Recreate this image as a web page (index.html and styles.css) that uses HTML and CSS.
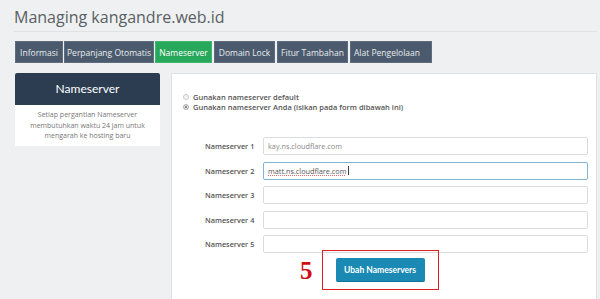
FILE: index.html
```html
<!DOCTYPE html>
<html>
<head>
<meta charset="utf-8">
<link rel="stylesheet" href="styles.css">
</head>
<body>
<div class="page">
  <h1 class="title">Managing kangandre.web.id</h1>
  <div class="tabs">
    <div class="tab t1">Informasi</div>
    <div class="tab t2">Perpanjang Otomatis</div>
    <div class="tab t3 active">Nameserver</div>
    <div class="tab t4">Domain Lock</div>
    <div class="tab t5">Fitur Tambahan</div>
    <div class="tab t6">Alat Pengelolaan <span class="caret"></span></div>
  </div>
  <div class="cols">
    <div class="side">
      <div class="side-head">Nameserver</div>
      <div class="side-body">Setiap pergantian Nameserver membutuhkan waktu 24 jam untuk mengarah ke hosting baru</div>
    </div>
    <div class="main">
      <div class="radios">
        <label class="radio"><span class="dot"></span>Gunakan nameserver default</label>
        <label class="radio"><span class="dot on"></span>Gunakan nameserver Anda (isikan pada form dibawah ini)</label>
      </div>
      <div class="form">
        <div class="row"><span class="lbl">Nameserver 1</span><div class="inp">kay.ns.cloudflare.com</div></div>
        <div class="row"><span class="lbl">Nameserver 2</span><div class="inp focus"><span class="typed">matt.ns.cloudflare.com</span><span class="cursor"></span></div></div>
        <div class="row"><span class="lbl">Nameserver 3</span><div class="inp"></div></div>
        <div class="row"><span class="lbl">Nameserver 4</span><div class="inp"></div></div>
        <div class="row"><span class="lbl">Nameserver 5</span><div class="inp"></div></div>
      </div>
      <div class="actions">
        <span class="step">5</span>
        <div class="hl"><div class="btn">Ubah Nameservers</div></div>
      </div>
    </div>
  </div>
</div>
</body>
</html>
```

FILE: styles.css
```css
* { box-sizing: border-box; }
html, body { margin: 0; padding: 0; }
body {
  background: #eef0f1;
  font-family: "Open Sans", "Liberation Sans", sans-serif;
  width: 600px;
  height: 299px;
  overflow: hidden;
}
.page { padding: 0 3px 0 15px; }
.title {
  margin: 0;
  padding: 7px 0 4px 0;
  font-weight: 400;
  font-size: 16px;
  line-height: 20px;
  color: #5a5f63;
  border-bottom: 1px solid #e0e3e5;
  margin-left: -1px;
}
.tabs {
  display: flex;
  gap: 1px;
  margin-top: 9px;
  height: 22px;
}
.tab {
  background: #4b5a6c;
  color: #e8ecf0;
  font-size: 8.5px;
  line-height: 22px;
  text-align: center;
  border: 1px solid #5f6d7e;
}
.t1 { width: 48px; }
.t2 { width: 90px; }
.t3 { width: 57px; }
.t4 { width: 61px; margin-left: 1px; }
.t5 { width: 71px; margin-left: 1px; }
.t6 { width: 82px; margin-left: 1px; padding-right: 8px; }
.tab.active { background: #27a85b; border-color: #3db86c; color: #fff; }
.caret {
  display: inline-block;
  width: 0; height: 0;
  border-left: 3px solid transparent;
  border-right: 3px solid transparent;
  border-top: 3px solid #6a7888;
  vertical-align: middle;
  margin-left: 4px;
}
.cols {
  display: flex;
  gap: 11px;
  margin-top: 10px;
  align-items: flex-start;
}
.side { width: 145px; background: #fff; }
.side-head {
  background: #2c3d52;
  color: #fff;
  font-family: "Lato", "Open Sans", sans-serif;
  font-size: 12px;
  height: 32px;
  line-height: 32px;
  text-align: center;
  border-radius: 2px 2px 0 0;
}
.side-body {
  padding: 5px 8px 5px;
  font-size: 7px;
  line-height: 10.5px;
  color: #777;
  text-align: center;
  height: 41px;
}
.main {
  flex: 1;
  background: #fff;
  border: 1px solid #dde1e3;
  height: 240px;
  padding: 18px 8px 0 8px;
}
.radios { display: flex; flex-direction: column; gap: 0; padding-left: 3px; }
.radio {
  display: flex;
  align-items: center;
  font-size: 7.5px;
  font-weight: 600;
  color: #555;
  line-height: 10px;
}
.dot {
  width: 6px; height: 6px;
  border-radius: 50%;
  border: 1px solid #c8c8c8;
  margin-right: 4px;
  background: #f4f4f4;
}
.dot.on { background: #666; border-color: #bbb; box-shadow: inset 0 0 0 1px #fff; }
.form {
  margin-top: 25px;
  display: flex;
  flex-direction: column;
  gap: 6.5px;
}
.row { display: flex; align-items: center; height: 18px; }
.lbl {
  width: 58px;
  margin-left: 25px;
  font-size: 7.3px;
  font-weight: 600;
  color: #555;
}
.inp {
  width: 325px;
  height: 18px;
  border: 1px solid #d9dcde;
  border-radius: 2px;
  font-size: 7.3px;
  color: #888;
  padding-left: 4px;
  line-height: 16px;
  display: flex;
  align-items: center;
}
.inp.focus { border-color: #7fb4d4; color: #555; }
.typed { text-decoration: underline dotted #e07070; text-decoration-thickness: 0.5px; }
.cursor { display: inline-block; width: 1px; height: 9px; background: #444; margin-left: 2px; }
.actions {
  display: flex;
  align-items: center;
  margin-top: -3px;
  margin-left: 120px;
}
.step {
  font-family: "Liberation Serif", "DejaVu Serif", serif;
  font-weight: 700;
  font-size: 25px;
  color: #d01010;
  margin-right: 9px;
  line-height: 25px;
  margin-top: 1px;
}
.hl {
  border: 1.5px solid #e02020;
  width: 117px;
  height: 40px;
  display: flex;
  justify-content: center;
  align-items: center;
}
.btn {
  background: #1a8ab4;
  color: #fff;
  font-family: "Lato", "Open Sans", sans-serif;
  font-weight: 700;
  font-size: 8.5px;
  width: 89px;
  height: 24px;
  line-height: 24px;
  text-align: center;
  border-radius: 2px;
  border-bottom: 1px solid #147096;
}
```
